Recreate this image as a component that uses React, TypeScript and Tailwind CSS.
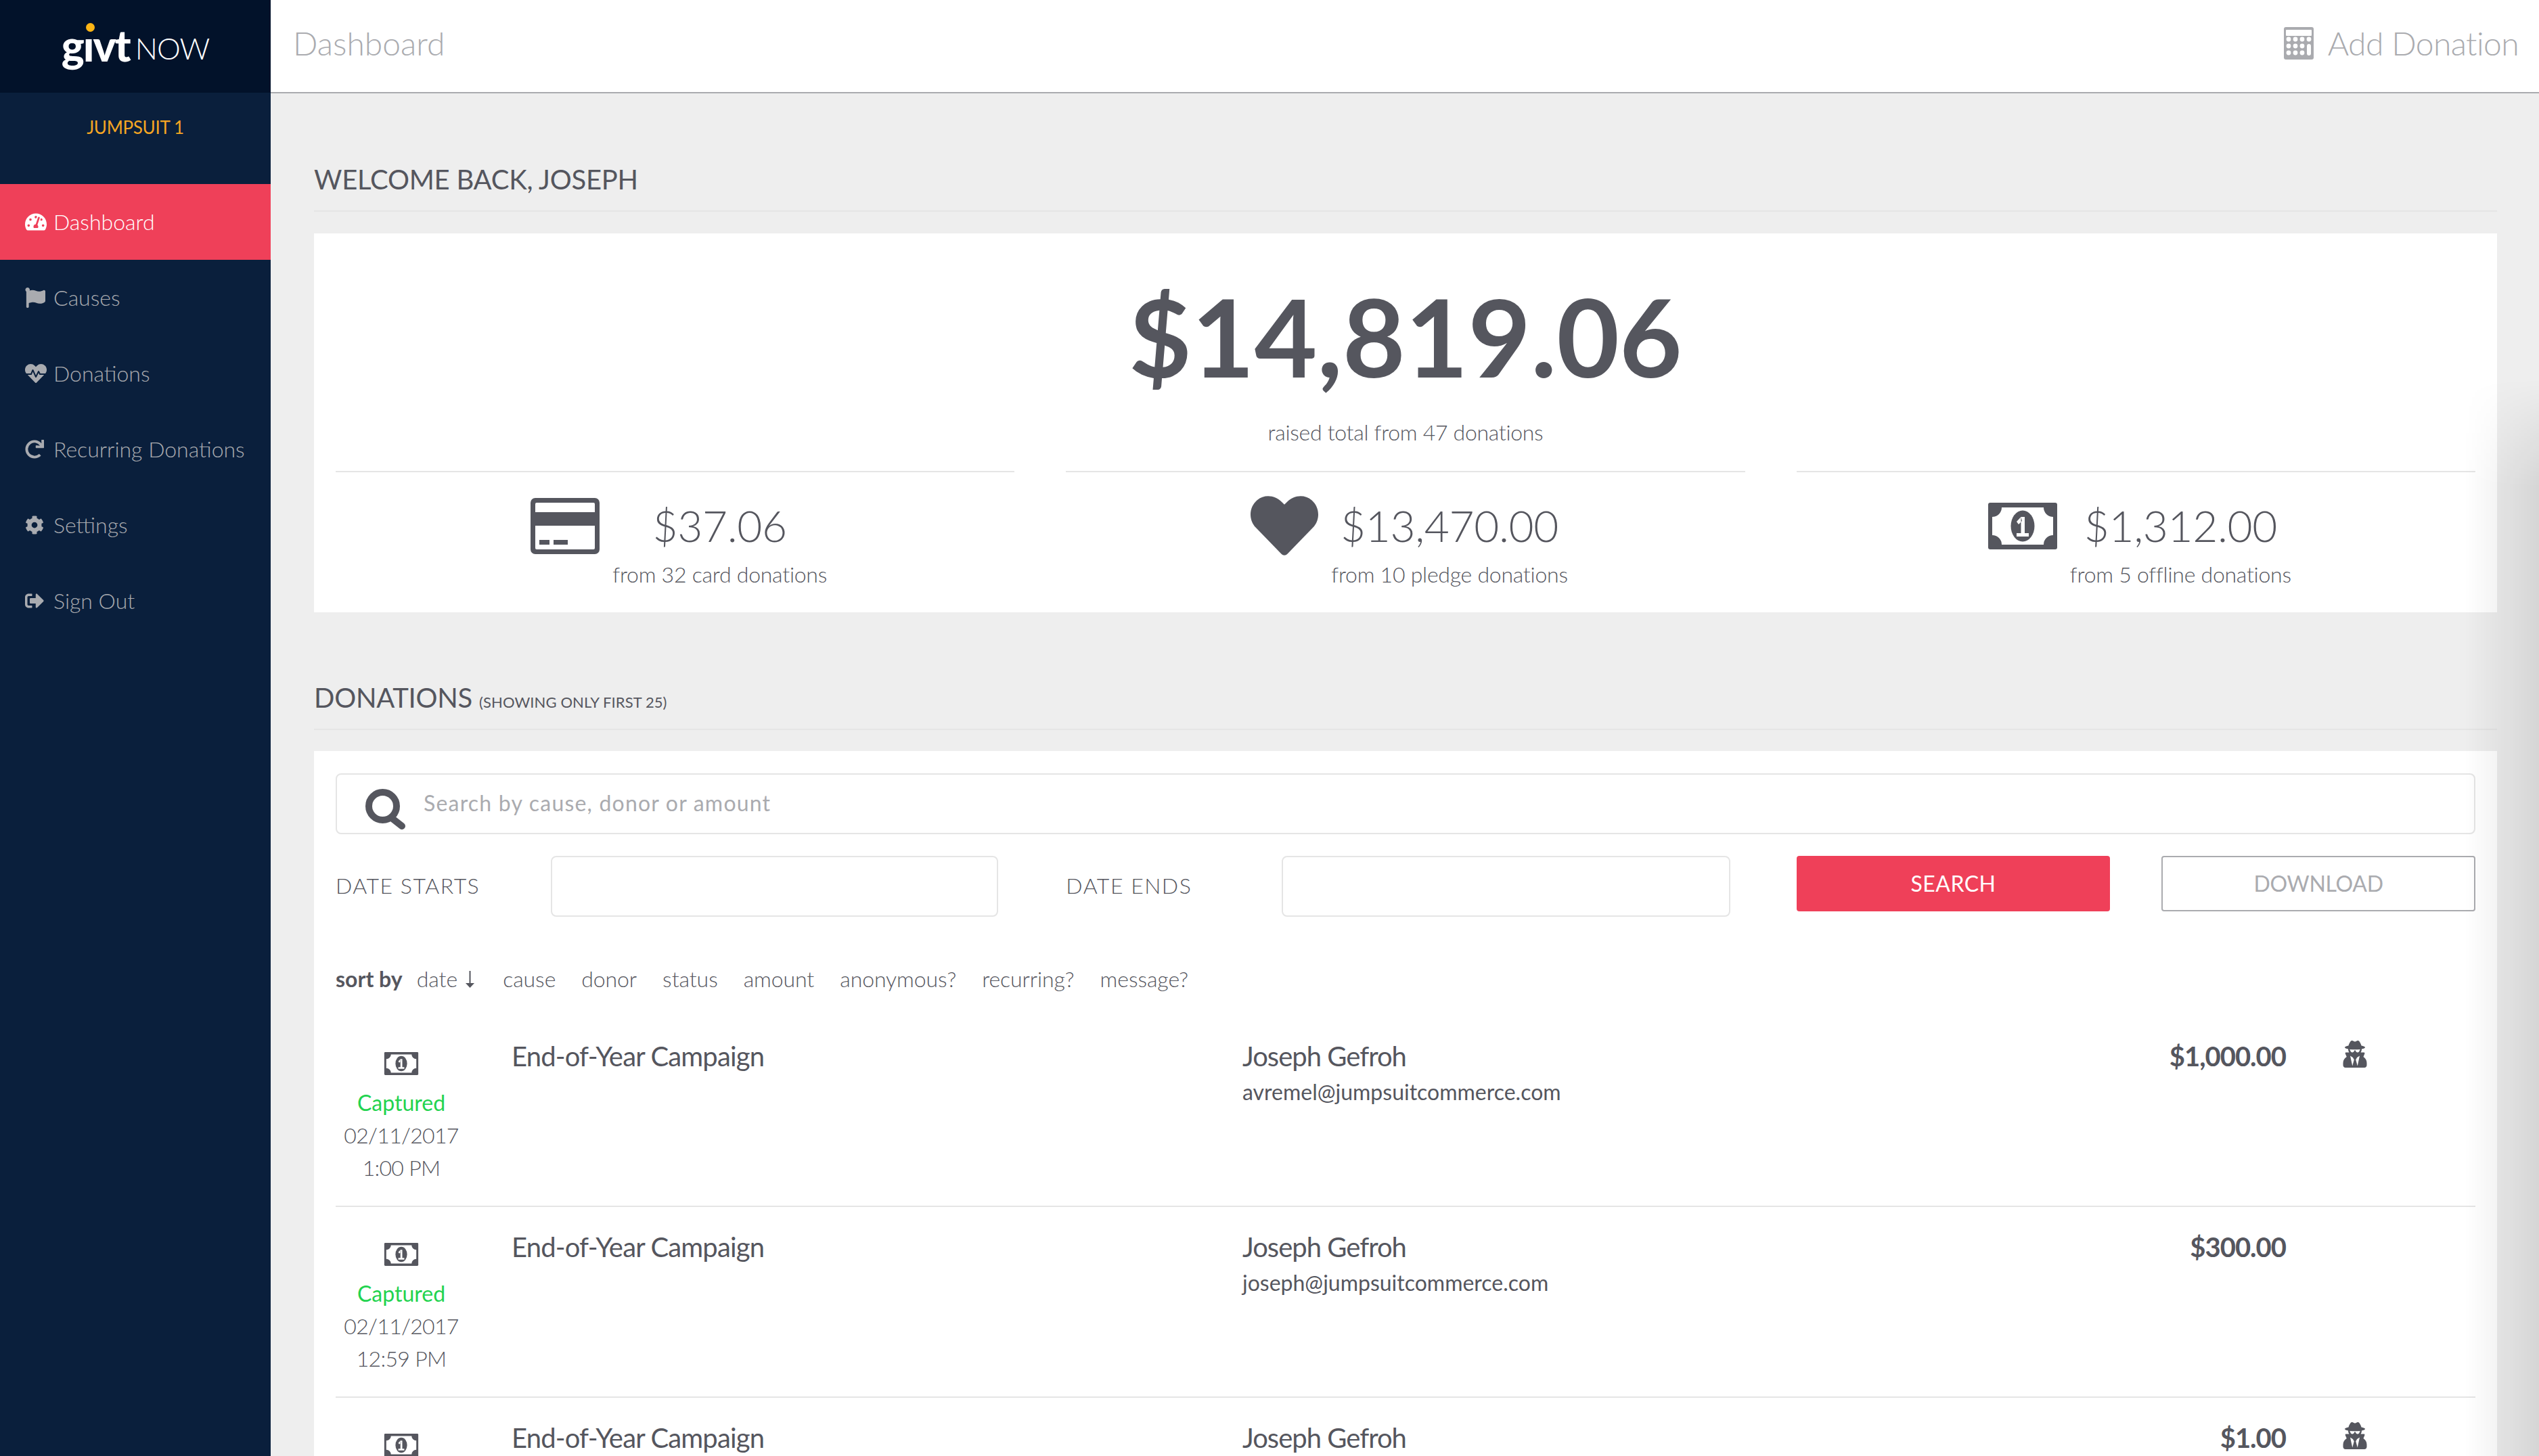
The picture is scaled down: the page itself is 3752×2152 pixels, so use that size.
import type { ReactNode } from 'react';
import { FaCog, FaFlag, FaHeart, FaHeartbeat, FaRedo, FaSignOutAlt, FaTachometerAlt, FaUserSecret } from 'react-icons/fa';

const navItems = [
  { label: 'Dashboard', icon: <FaTachometerAlt size={32} />, active: true },
  { label: 'Causes', icon: <FaFlag size={30} /> },
  { label: 'Donations', icon: <FaHeartbeat size={32} /> },
  { label: 'Recurring Donations', icon: <FaRedo size={28} /> },
  { label: 'Settings', icon: <FaCog size={28} /> },
  { label: 'Sign Out', icon: <FaSignOutAlt size={28} /> },
];

const sortLinks = ['cause', 'donor', 'status', 'amount', 'anonymous?', 'recurring?', 'message?'];

const donations = [
  { email: 'avremel@jumpsuitcommerce.com', amount: '$1,000.00', time: '1:00 PM', secret: true },
  { email: 'joseph@jumpsuitcommerce.com', amount: '$300.00', time: '12:59 PM', secret: false },
  { email: 'joseph@jumpsuitcommerce.com', amount: '$1.00', time: '12:58 PM', secret: true },
];

// Dollar bill with a "1" in the middle
const BillIcon = ({ className }: { className: string }) => (
  <svg viewBox="0 0 102 69" className={className}>
    <rect width="102" height="69" rx="3" fill="#55565e" />
    <path d="M20 7H82A14 14 0 0 0 96 21V48A14 14 0 0 0 82 62H20A14 14 0 0 0 6 48V21A14 14 0 0 0 20 7Z" fill="#fff" />
    <ellipse cx="51" cy="34.5" rx="17.5" ry="23" fill="#55565e" />
    <path d="M42 45H60V50H42ZM48.5 21H54V46H48.5ZM48.5 21L42 28L45 32L50 27Z" fill="#fff" />
  </svg>
);

const CardIcon = () => (
  <svg viewBox="0 0 102 83" className="w-[102px] h-[83px] shrink-0">
    <rect width="102" height="83" rx="7" fill="#55565e" />
    <rect x="7" y="7" width="88" height="69" rx="2" fill="#fff" />
    <rect x="7" y="21" width="88" height="20" fill="#55565e" />
    <rect x="13" y="62" width="15" height="7" fill="#55565e" />
    <rect x="34" y="62" width="21" height="7" fill="#55565e" />
  </svg>
);

const CalculatorIcon = () => (
  <svg viewBox="0 0 44 48" className="w-[44px] h-[48px]">
    <rect width="44" height="48" rx="3" fill="#aaabaf" />
    <rect x="3" y="4" width="38" height="9" rx="1" fill="#fff" />
    {[18, 28, 38].map((cy) =>
      [7, 17, 27].map((cx) => <circle key={`${cx}-${cy}`} cx={cx} cy={cy} r="3.4" fill="#fff" />),
    )}
    <circle cx="37" cy="18" r="3.4" fill="#fff" />
    <rect x="34" y="25" width="6" height="17" rx="3" fill="#fff" />
  </svg>
);

const SearchIcon = () => (
  <svg viewBox="0 0 60 60" className="w-[60px] h-[60px] shrink-0">
    <circle cx="25.5" cy="25.5" r="20.5" fill="none" stroke="#55565e" strokeWidth="10" />
    <path d="M40 44L54 55" stroke="#55565e" strokeWidth="10" strokeLinecap="round" />
  </svg>
);

const SectionHeading = ({ children, className }: { children: ReactNode; className: string }) => (
  <div className={`${className} pb-[22px] border-b-2 border-[#e5e5e5] text-[40px] leading-[48px] text-[#55565e] tracking-[-0.25px]`}>
    {children}
  </div>
);

const Stat = ({ icon, amount, note }: { icon: ReactNode; amount: string; note: string }) => (
  <div className="border-t-2 border-[#e5e5e5] pt-[39px] pb-[36px] flex justify-center gap-[19px] pl-[11px]">
    <div className="h-[80px] flex items-center">{icon}</div>
    <div className="text-center">
      <div className="text-[64px] leading-[80px] font-light tracking-[-0.4px]">{amount}</div>
      <div className="text-[32px] leading-[40px] font-light mt-[12px] tracking-[-0.25px]">{note}</div>
    </div>
  </div>
);

export default function App() {
  return (
    <div className="relative w-[3752px] h-[2152px] overflow-hidden flex bg-[#eeeeee] font-['Lato',sans-serif] text-[#55565e]">
      <aside className="w-[400px] shrink-0 bg-[#0a1f3c]">
        <div className="h-[137px] bg-[#02122a] flex items-center justify-center text-white pb-[4px]">
          <div className="relative text-[64px] leading-none font-black tracking-[-2px]">
            gıvt
            <span className="absolute left-[36px] top-[-1px] w-[13px] h-[13px] rounded-full bg-[#fdb515]" />
          </div>
          <span className="text-[44px] font-light leading-none ml-[8px] mt-[8px] tracking-[-1px]">NOW</span>
        </div>
        <div className="h-[135px] pt-[31px] text-center text-[26px] leading-[40px] tracking-[-0.3px] text-[#f5a623]">JUMPSUIT 1</div>
        <nav>
          {navItems.map((item) => (
            <div
              key={item.label}
              className={`h-[112px] flex items-center pl-[37px] text-[32px] font-light ${
                item.active ? 'bg-[#ef4059] text-white' : 'text-[#a9abb0]'
              }`}
            >
              <span className="w-[42px] flex items-center justify-start">{item.icon}</span>
              {item.label}
            </div>
          ))}
        </nav>
      </aside>

      <main className="flex-1 min-w-0">
        <header className="h-[138px] bg-white border-b-2 border-[#aaabaf] pl-[33px] pr-[30px] pb-[8px] flex items-center justify-between text-[48px] font-light text-[#aaabaf]">
          <span>Dashboard</span>
          <span className="flex items-center gap-[21px] tracking-[-0.6px]">
            <CalculatorIcon />
            Add Donation
          </span>
        </header>

        <div className="pl-[64px] pr-[62px]">
          <SectionHeading className="pt-[103px]">WELCOME BACK, JOSEPH</SectionHeading>

          <section className="mt-[32px] bg-white px-[32px] pt-[51px]">
            <div className="text-center text-[160px] leading-[200px] font-bold">$14,819.06</div>
            <div className="text-center text-[32px] leading-[40px] font-light mt-[23px] mb-[37px] tracking-[-0.3px]">
              raised total from 47 donations
            </div>
            <div className="grid grid-cols-3 gap-x-[76px]">
              <Stat icon={<CardIcon />} amount="$37.06" note="from 32 card donations" />
              <Stat icon={<FaHeart size={100} className="shrink-0" />} amount="$13,470.00" note="from 10 pledge donations" />
              <Stat icon={<BillIcon className="w-[102px] h-[69px] shrink-0" />} amount="$1,312.00" note="from 5 offline donations" />
            </div>
          </section>

          <SectionHeading className="mt-[102px]">
            DONATIONS <span className="text-[22px] leading-none tracking-[0.1px]">(SHOWING ONLY FIRST 25)</span>
          </SectionHeading>

          <section className="mt-[31px] bg-white px-[32px] pt-[33px]">
            <div className="h-[90px] border-2 border-[#e5e5e5] rounded-[8px] flex items-center pl-[42px] gap-[26px] pt-[16px]">
              <SearchIcon />
              <span className="text-[32px] text-[#aaabaf] -mt-[18px] tracking-[1.2px]">Search by cause, donor or amount</span>
            </div>

            <div className="grid grid-cols-3 gap-x-[76px] mt-[32px]">
              <div className="flex">
                <span className="w-[318px] shrink-0 text-[32px] leading-[88px] font-light tracking-[1.5px]">DATE STARTS</span>
                <div className="flex-1 mr-[24px] h-[90px] border-2 border-[#e5e5e5] rounded-[8px]" />
              </div>
              <div className="flex">
                <span className="w-[319px] shrink-0 text-[32px] leading-[88px] font-light tracking-[1.5px]">DATE ENDS</span>
                <div className="flex-1 mr-[22px] h-[90px] border-2 border-[#e5e5e5] rounded-[8px]" />
              </div>
              <div className="grid grid-cols-2 gap-x-[76px]">
                <button className="h-[82px] rounded-[4px] bg-[#ef4059] text-white text-[32px] tracking-[0.5px]">SEARCH</button>
                <button className="h-[82px] rounded-[4px] border-2 border-[#aaabaf] text-[#aaabaf] text-[32px] tracking-[-0.3px]">DOWNLOAD</button>
              </div>
            </div>

            <div className="mt-[72px] flex items-center text-[32px] leading-[40px] font-light">
              <span className="font-bold mr-[21px]">sort by</span>
              <span className="flex items-center mr-[42px]">
                date
                <svg viewBox="0 0 13 25" className="w-[13px] h-[25px] ml-[12px]">
                  <path d="M5.5 0H7.5V18H13L6.5 25L0 18H5.5Z" fill="#55565e" />
                </svg>
              </span>
              <div className="flex gap-x-[38px] tracking-[-0.08px]">
                {sortLinks.map((link) => (
                  <span key={link}>{link}</span>
                ))}
              </div>
            </div>

            <div className="mt-[35px]">
              {donations.map((row, i) => (
                <div key={i} className="flex pt-[35px] pb-[32px] border-b-2 border-[#e5e5e5]">
                  <div className="w-[194px] shrink-0 flex flex-col items-center text-[32px] leading-[48px] font-light tracking-[-0.7px]">
                    <BillIcon className="w-[52px] h-[34px] mt-[18px] mb-[17px]" />
                    <span className="text-[#22d34f] font-normal tracking-normal">Captured</span>
                    <span>02/11/2017</span>
                    <span>{row.time}</span>
                  </div>
                  <div className="w-[1080px] shrink-0 ml-[66px] text-[40px] leading-[48px] tracking-[-0.85px]">End-of-Year Campaign</div>
                  <div className="flex-1 min-w-0">
                    <div className="text-[40px] leading-[48px] tracking-[-1px]">Joseph Gefroh</div>
                    <div className="text-[32px] leading-[40px] mt-[9px]">{row.email}</div>
                  </div>
                  <div className="w-[400px] shrink-0 text-right text-[40px] leading-[48px] font-bold tracking-[-1px]">{row.amount}</div>
                  <div className="w-[280px] shrink-0 pl-[82px] pt-[1px]">
                    {row.secret && <FaUserSecret size={40} />}
                  </div>
                </div>
              ))}
            </div>
          </section>
        </div>
      </main>

      {/* soft shadow along the right edge */}
      <div className="pointer-events-none absolute top-[560px] right-0 bottom-0 w-[110px] bg-gradient-to-r from-transparent to-black/10 [mask-image:linear-gradient(to_bottom,transparent,black_160px)]" />
    </div>
  );
}
